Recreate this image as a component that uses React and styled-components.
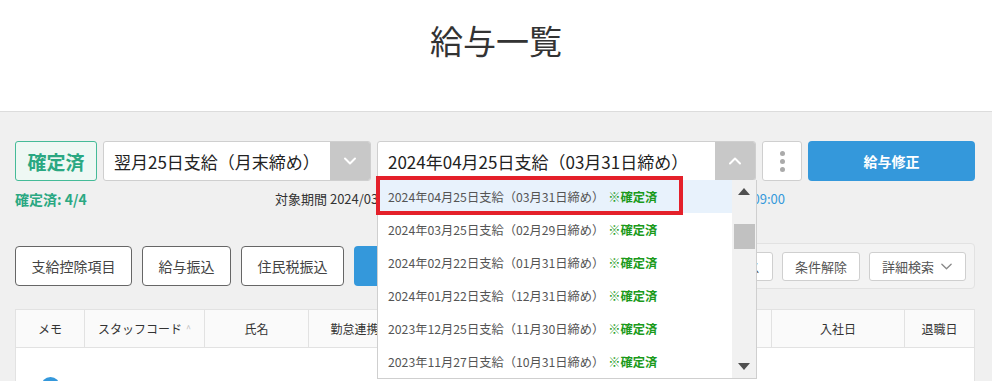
import React from 'react';
import styled, { createGlobalStyle } from 'styled-components';

const GlobalStyle = createGlobalStyle`
  body {
    margin: 0;
    background: #f0f0f0;
    font-family: "Noto Sans CJK JP", "Noto Sans", sans-serif;
    color: #333;
  }
`;

const Header = styled.header`
  background: #fff;
  height: 112px;
  border-bottom: 1px solid #dcdcdc;
  display: flex;
  justify-content: center;
  box-sizing: border-box;
  padding-top: 18px;
`;

const Title = styled.h1`
  margin: 0;
  font-size: 33px;
  line-height: 44px;
  font-weight: 400;
  color: #333;
`;

const Main = styled.main`
  padding: 29px 17px 0 15px;
`;

const TopRow = styled.div`
  display: flex;
  gap: 6px;
  height: 40px;
`;

const StatusBadge = styled.div`
  width: 82px;
  box-sizing: border-box;
  border: 1px solid #45bb98;
  background: #eef8f4;
  color: #2aa882;
  border-radius: 3px;
  font-size: 19px;
  font-weight: 700;
  display: flex;
  align-items: center;
  justify-content: center;
`;

const Select = styled.div`
  position: relative;
  width: ${(p) => p.$width}px;
  box-sizing: border-box;
  border: 1px solid #cfcfcf;
  border-radius: 3px;
  background: #fff;
  display: flex;
`;

const SelectText = styled.div`
  flex: 1;
  padding-left: 10px;
  font-size: 17px;
  color: #222;
  display: flex;
  align-items: center;
  white-space: nowrap;
`;

const SelectToggle = styled.div`
  width: 40px;
  background: #c8c8c8;
  border-radius: 0 2px 2px 0;
  display: flex;
  align-items: center;
  justify-content: center;
`;

const IconButton = styled.button`
  width: 40px;
  box-sizing: border-box;
  border: 1px solid #cfcfcf;
  border-radius: 3px;
  background: #fff;
  display: flex;
  flex-direction: column;
  align-items: center;
  justify-content: center;
  gap: 3px;
  padding: 0;
`;

const Dot = styled.span`
  width: 5px;
  height: 5px;
  border-radius: 50%;
  background: #aaa;
`;

const PrimaryButton = styled.button`
  flex: ${(p) => (p.$grow ? 1 : 'none')};
  width: ${(p) => (p.$width ? `${p.$width}px` : 'auto')};
  height: 40px;
  border: none;
  border-radius: 4px;
  background: #3498db;
  color: #fff;
  font-family: inherit;
  font-size: 14px;
  font-weight: 700;
`;

const Dropdown = styled.div`
  position: absolute;
  top: 100%;
  left: -1px;
  width: 380px;
  height: 199px;
  box-sizing: border-box;
  background: #fff;
  border: 1px solid #cfcfcf;
  border-top: none;
  display: flex;
  z-index: 10;
`;

const OptionList = styled.ul`
  list-style: none;
  margin: 0;
  padding: 0;
  flex: 1;
  overflow: hidden;
`;

const Option = styled.li`
  height: 33px;
  padding-left: 10px;
  display: flex;
  align-items: center;
  font-size: 12.25px;
  color: #555;
  white-space: nowrap;
  background: ${(p) => (p.$active ? '#e8f2fc' : '#fff')};
`;

const Confirmed = styled.span`
  color: #1b9a1b;
  font-weight: 700;
  margin-left: 4px;
`;

const Scrollbar = styled.div`
  width: 24px;
  background: #f1f1f1;
  display: flex;
  flex-direction: column;
  align-items: center;
  padding: 8px 0;
  box-sizing: border-box;
`;

const ScrollThumb = styled.div`
  width: 21px;
  height: 25px;
  background: #c1c1c1;
  margin-top: 29px;
  flex: none;
`;

const Highlight = styled.div`
  position: absolute;
  left: -2px;
  top: -4px;
  width: 307px;
  height: 39px;
  box-sizing: border-box;
  border: 4px solid #e4202a;
  pointer-events: none;
`;

const InfoRow = styled.div`
  display: flex;
  margin-top: 9px;
  font-size: 13px;
  line-height: 18px;
`;

const Count = styled.div`
  width: 260px;
  color: #2aa882;
  font-weight: 700;
  font-size: 14px;
`;

const Period = styled.div`
  width: 510px;
  display: flex;
  justify-content: space-between;
  color: #333;
  white-space: nowrap;
`;

const Link = styled.span`
  color: #3498db;
`;

const ActionRow = styled.div`
  display: flex;
  align-items: center;
  gap: 10px;
  margin-top: 35px;
  height: 46px;
`;

const OutlineButton = styled.button`
  height: 40px;
  box-sizing: border-box;
  padding: 0 15.5px;
  border: 1px solid #666;
  border-radius: 4px;
  background: #fff;
  color: #444;
  font-family: inherit;
  font-size: 14px;
`;

const FilterPanel = styled.div`
  flex: 1;
  margin-left: 10px;
  height: 46px;
  box-sizing: border-box;
  padding: 0 8px;
  border: 1px solid #e2e2e2;
  border-radius: 4px;
  background: #f3f3f3;
  display: flex;
  align-items: center;
  justify-content: flex-end;
  gap: 9px;
`;

const SmallButton = styled.button`
  height: 29px;
  box-sizing: border-box;
  padding: 0 12px;
  border: 1px solid #cfcfcf;
  border-radius: 3px;
  background: #fff;
  color: #555;
  font-family: inherit;
  font-size: 13px;
  display: flex;
  align-items: center;
  gap: 6px;
`;

const Table = styled.div`
  margin-top: 20px;
  border: 1px solid #e2e2e2;
  background: #fff;
`;

const Grid = styled.div`
  display: grid;
  grid-template-columns: 68px 120px 104px 92px 185px 186px 133px 1fr;
`;

const HeadCell = styled.div`
  height: 37px;
  background: #fafafa;
  border-bottom: 1px solid #e2e2e2;
  border-left: ${(p) => (p.$first ? 'none' : '1px solid #e2e2e2')};
  display: flex;
  align-items: center;
  justify-content: center;
  font-size: 12px;
  color: #333;
  white-space: nowrap;
`;

const SortMark = styled.span`
  color: #bbb;
  font-size: 9px;
  margin-left: 4px;
`;

const BodyCell = styled.div`
  height: 76px;
  display: flex;
  align-items: center;
  justify-content: center;
`;

const MemoIcon = styled.span`
  width: 19px;
  height: 19px;
  border-radius: 50%;
  background: #3498db;
`;

const Chevron = ({ up, color = '#fff', size = 14, width = 2 }) => (
  <svg width={size} height={size} viewBox="0 0 14 14">
    <polyline
      points={up ? '2,9.5 7,4.5 12,9.5' : '2,4.5 7,9.5 12,4.5'}
      fill="none"
      stroke={color}
      strokeWidth={width}
      strokeLinecap="round"
      strokeLinejoin="round"
    />
  </svg>
);

const Arrow = ({ up }) => (
  <svg width="12" height="7" viewBox="0 0 12 7">
    <polygon points={up ? '0,7 6,0 12,7' : '0,0 6,7 12,0'} fill="#505050" />
  </svg>
);

const options = [
  ['2024年04月25日支給（03月31日締め）', true],
  ['2024年03月25日支給（02月29日締め）'],
  ['2024年02月22日支給（01月31日締め）'],
  ['2024年01月22日支給（12月31日締め）'],
  ['2023年12月25日支給（11月30日締め）'],
  ['2023年11月27日支給（10月31日締め）'],
];

const columns = ['メモ', 'スタッフコード', '氏名', '勤怠連携', '雇用形態', '所属', '入社日', '退職日'];

export default function App() {
  return (
    <>
      <GlobalStyle />
      <Header>
        <Title>給与一覧</Title>
      </Header>
      <Main>
        <TopRow>
          <StatusBadge>確定済</StatusBadge>
          <Select $width={268}>
            <SelectText>翌月25日支給（月末締め）</SelectText>
            <SelectToggle>
              <Chevron />
            </SelectToggle>
          </Select>
          <Select $width={379}>
            <SelectText>2024年04月25日支給（03月31日締め）</SelectText>
            <SelectToggle>
              <Chevron up />
            </SelectToggle>
            <Dropdown>
              <OptionList>
                {options.map(([label, active]) => (
                  <Option key={label} $active={active}>
                    {label}
                    <Confirmed>※確定済</Confirmed>
                  </Option>
                ))}
              </OptionList>
              <Scrollbar>
                <Arrow up />
                <ScrollThumb />
                <div style={{ flex: 1 }} />
                <Arrow />
              </Scrollbar>
              <Highlight />
            </Dropdown>
          </Select>
          <IconButton>
            <Dot />
            <Dot />
            <Dot />
          </IconButton>
          <PrimaryButton $grow>給与修正</PrimaryButton>
        </TopRow>

        <InfoRow>
          <Count>確定済: 4/4</Count>
          <Period>
            <span>対象期間 2024/03/01 〜 2024/03/31</span>
            <Link>最終更新 2024/04/20 09:00</Link>
          </Period>
        </InfoRow>

        <ActionRow>
          <OutlineButton>支給控除項目</OutlineButton>
          <OutlineButton>給与振込</OutlineButton>
          <OutlineButton>住民税振込</OutlineButton>
          <PrimaryButton $width={110}>一括確定</PrimaryButton>
          <FilterPanel>
            <SmallButton>ステータス</SmallButton>
            <SmallButton>条件解除</SmallButton>
            <SmallButton>
              詳細検索
              <Chevron color="#888" size={13} width={1.4} />
            </SmallButton>
          </FilterPanel>
        </ActionRow>

        <Table>
          <Grid>
            {columns.map((c, i) => (
              <HeadCell key={c} $first={i === 0}>
                {c}
                {c === 'スタッフコード' && <SortMark>^</SortMark>}
              </HeadCell>
            ))}
            <BodyCell>
              <MemoIcon />
            </BodyCell>
          </Grid>
        </Table>
      </Main>
    </>
  );
}
